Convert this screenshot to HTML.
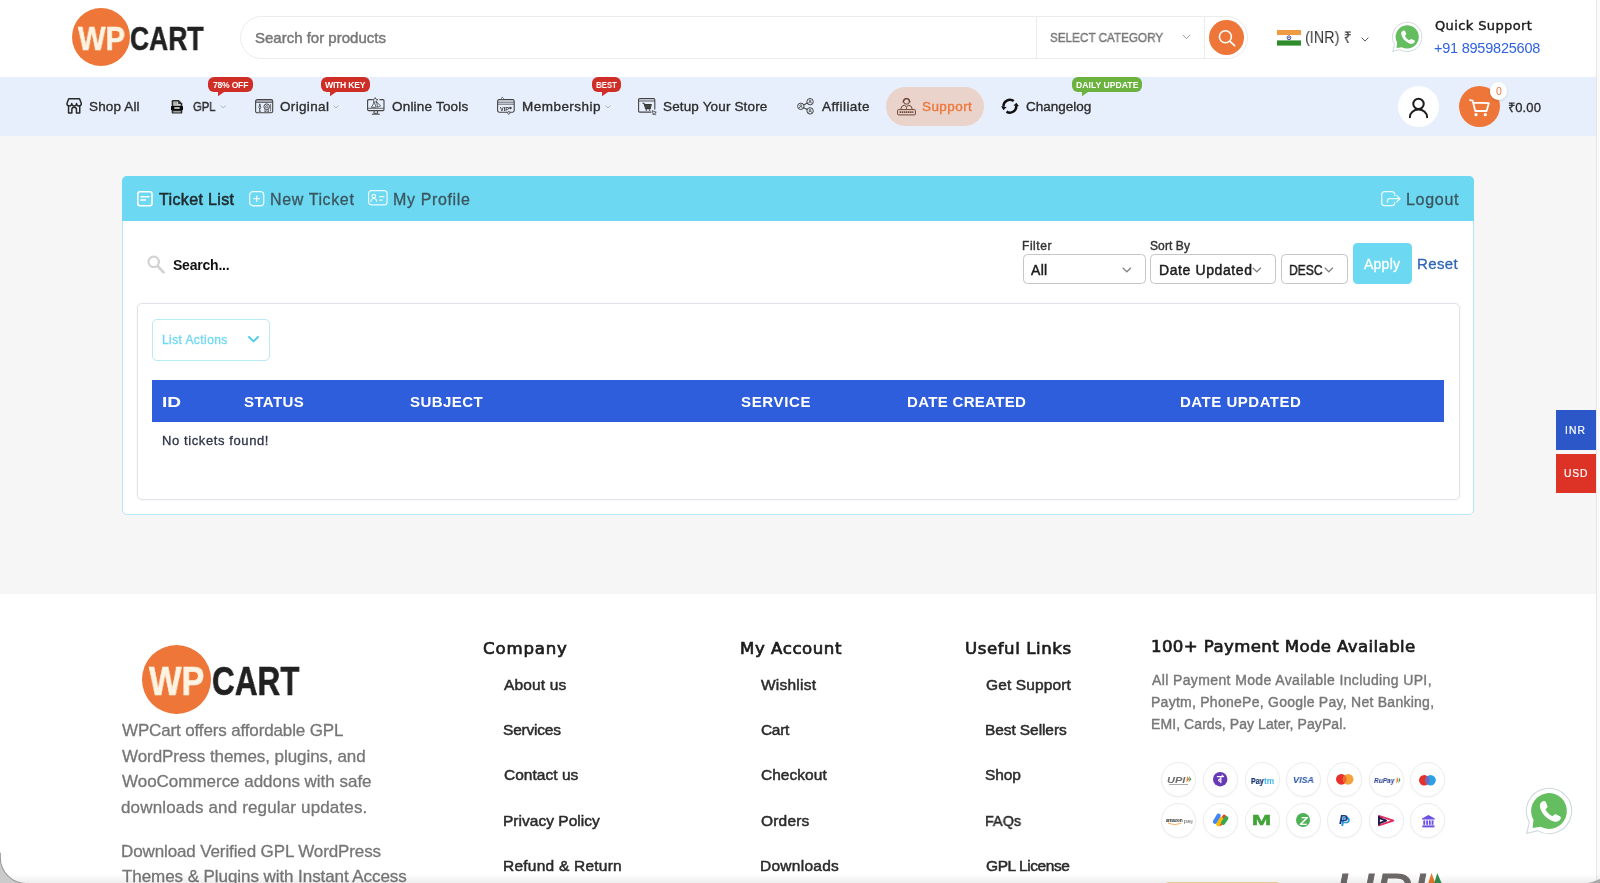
<!DOCTYPE html>
<html lang="en">
<head>
<meta charset="utf-8">
<title>Support – WPCart</title>
<style>
*{box-sizing:border-box;margin:0;padding:0}
html,body{width:1600px;height:883px;overflow:hidden;background:#f6f6f6}
body{position:relative;font-family:"Liberation Sans",sans-serif;color:#2a2a2a;font-size:14px;line-height:1}
a{color:inherit;text-decoration:none}
.t{position:absolute;white-space:nowrap;line-height:1;display:block;will-change:transform}
.b{position:absolute;display:block}
svg{position:absolute;display:block;overflow:visible}
header,nav,main,footer,section,aside,ul,li{display:block;list-style:none}

#topbg{left:0;top:0;width:1596px;height:77px;background:#fff}
#navbg{left:0;top:77px;width:1596px;height:59px;background:#e8effc}
#searchbar{left:240px;top:16px;width:1008px;height:43px;border:1px solid #ececec;border-radius:22px;background:#fff}
.vdiv{top:17px;width:1px;height:41px;background:#ececec}
.disc{border-radius:50%;background:#ee7639}
.badge{height:14.6px;border-radius:6px}
.red{background:#cf2e27}.green{background:#6bb23f}
#pill{left:886px;top:87px;width:98px;height:39px;border-radius:20px;background:#ead3cb}
#user{left:1397.8px;top:85.5px;width:41.4px;height:41.4px;border-radius:50%;background:#fff}
#cart{left:1459px;top:85.5px;width:41.4px;height:41.4px;border-radius:50%;background:#ee7639}
#cnt{left:1489.5px;top:82.4px;width:17.8px;height:17.8px;border-radius:50%;background:#fff;box-shadow:0 1px 3px rgba(0,0,0,.12)}

#panel{left:122px;top:176px;width:1352px;height:338.5px;background:#fff;border:1px solid #b5e8f5;border-radius:5px}
#phead{left:122px;top:176px;width:1352px;height:45px;background:#6dd8f2;border-radius:5px 5px 0 0}
.sel{height:30px;top:254px;border:1px solid #c6c6c6;border-radius:4.5px;background:#fff}
#apply{left:1353px;top:243px;width:58.5px;height:41px;border-radius:4.5px;background:#6dd8f2}
#inner{left:136.5px;top:303px;width:1323px;height:196.5px;background:#fff;border:1px solid #e2e3e8;border-radius:5px;box-shadow:0 0 3px rgba(0,0,0,.05)}
#lact{left:152px;top:318.5px;width:117.5px;height:42px;border:1px solid #b9eaf7;border-radius:5px;background:#fff}
#thead{left:152px;top:380px;width:1292px;height:41.5px;background:#2f5edc}

#footbg{left:0;top:594px;width:1596px;height:289px;background:#fff}
.pay{width:35px;height:35px;border-radius:50%;background:#fff;border:1px solid #ececec;box-shadow:0 1px 2px rgba(0,0,0,.04)}

#inr{left:1556px;top:410px;width:40px;height:39.5px;background:#2c57c9}
#usd{left:1556px;top:453.5px;width:40px;height:39.5px;background:#dc3326}
#sbar{left:1595.5px;top:0;width:4.5px;height:883px;background:#fafafa;border-left:1px solid #e6e6e6}
#botshade{left:0;top:874px;width:1600px;height:9px;background:linear-gradient(rgba(0,0,0,0),rgba(0,0,0,.065))}
</style>
</head>
<body>

<!-- ================= TOP HEADER ================= -->
<header>
  <div class="b" id="topbg"></div>
  <a href="#" aria-label="WPCart">
    <span class="b disc" style="left:71.5px;top:7.5px;width:58px;height:58px"></span>
    <span class="t" style="left:77.5px;top:21.6px;font-family:'Liberation Sans',sans-serif;font-size:33.4px;font-weight:700;-webkit-text-stroke:.5px currentColor;transform:scaleX(0.877);transform-origin:0 0;color:#fcf3e2;">WP</span>
    <span class="t" style="left:130.2px;top:21.6px;font-family:'Liberation Sans',sans-serif;font-size:33.4px;font-weight:700;-webkit-text-stroke:.5px currentColor;transform:scaleX(0.793);transform-origin:0 0;color:#212121;">CART</span>
  </a>
  <div class="b" id="searchbar"></div>
  <span class="t" style="left:255.3px;top:30.3px;font-family:'Liberation Sans',sans-serif;font-size:15.0px;font-weight:400;-webkit-text-stroke:.45px currentColor;color:#777;">Search for products</span>
  <i class="b vdiv" style="left:1036px"></i>
  <span class="t" style="left:1050.1px;top:31.0px;font-family:'Liberation Sans',sans-serif;font-size:13.0px;font-weight:400;-webkit-text-stroke:.4px currentColor;transform:scaleX(0.900);transform-origin:0 0;color:#777;">SELECT CATEGORY</span>
  <svg style="left:1182px;top:34px" width="9" height="6" viewBox="0 0 9 6"><path d="M.8.9 4.5 4.7 8.2.9" fill="none" stroke="#999" stroke-width="1"/></svg>
  <i class="b vdiv" style="left:1204px"></i>
  <span class="b disc" style="left:1209px;top:20px;width:35px;height:35px"></span>
  <svg style="left:1209px;top:20px" width="35" height="35" viewBox="0 0 35 35"><circle cx="16.400" cy="16.700" r="6" fill="none" stroke="#fff" stroke-width="1.600"/><path d="M21 21.400 25.600 25.700" stroke="#fff" stroke-width="1.700" stroke-linecap="round"/></svg>
  <!-- flag -->
  <svg style="left:1277px;top:29.7px" width="24" height="15.6" viewBox="0 0 24 15.6"><rect width="24" height="5.2" fill="#f09b41"/><rect y="5.2" width="24" height="5.2" fill="#fff"/><rect y="10.4" width="24" height="5.2" fill="#2f8c2c"/><circle cx="12" cy="7.8" r="1.9" fill="none" stroke="#2a3f9e" stroke-width=".9"/><circle cx="12" cy="7.8" r=".7" fill="#2a3f9e"/></svg>
  <span class="t" style="left:1304.9px;top:30.4px;font-family:'Liberation Sans',sans-serif;font-size:16.0px;font-weight:400;transform:scaleX(0.900);transform-origin:0 0;color:#333;">(INR) ₹</span>
  <svg style="left:1361px;top:37px" width="8" height="5" viewBox="0 0 8 5"><path d="M.6.6 4 4.1 7.4.6" fill="none" stroke="#555" stroke-width="1"/></svg>
  <!-- whatsapp -->
  <svg style="left:1391.40px;top:22.10px" width="31.10" height="32.40" viewBox="0 0 48 50"><path d="M2.55 45.5 5.38 34.32A22.65 22.65 0 1 1 13.68 42.62Z" fill="#fff" stroke="#cfd9dd" stroke-width="1.5" stroke-linejoin="round"/><path d="M8.6 40.1 9.50 31.95A17.9 17.9 0 1 1 16.60 38.80Z" fill="#64bd5f"/><path transform="translate(25 23) scale(1.04) translate(-25.3 -23.6)" d="M19.500 14.200c1-.5 2.200-.3 2.700.8l1.500 3.600c.4.900.1 1.700-.6 2.300l-1.200 1.100c1.400 3.100 3.600 5.200 6.800 6.700l1.300-1.300c.7-.7 1.500-.8 2.300-.4l3.400 1.700c1 .5 1.300 1.600.7 2.600-1.300 2.200-3.500 3-6.200 2.400C24 32 18 26.300 16.600 19.700c-.5-2.400.5-4.500 2.900-5.500Z" fill="#fff"/></svg>
  <span class="t" style="left:1435.3px;top:19.2px;font-family:'DejaVu Sans','Liberation Sans',sans-serif;font-size:13.0px;font-weight:400;letter-spacing:0.38px;-webkit-text-stroke:.4px currentColor;color:#1c1c1c;">Quick Support</span>
  <span class="t" style="left:1434.3px;top:40.8px;font-family:'Liberation Sans',sans-serif;font-size:14.5px;font-weight:400;letter-spacing:-0.23px;color:#2f62e0;">+91 8959825608</span>
</header>

<!-- ================= NAV ================= -->
<nav>
  <div class="b" id="navbg"></div>
  <ul>
  <li><a href="#">
    <svg style="left:66px;top:98.4px" width="16.3" height="16" viewBox="0 0 16 16" fill="none" stroke="#2b2b2b" stroke-width="1.5" stroke-linejoin="round" stroke-linecap="round"><path d="M2.6.8H13.4L15.2 5.6a2.4 2.4 0 0 1-4.8 0a2.4 2.4 0 0 1-4.8 0a2.4 2.4 0 0 1-4.8 0Z"/><path d="M2.4 8.3V15.1H5.7V11.6a2.300 2.300 0 0 1 4.6 0V15.100H13.600V8.300"/></svg>
    <span class="t" style="left:88.7px;top:100.2px;font-family:'Liberation Sans',sans-serif;font-size:13.5px;font-weight:400;letter-spacing:0.14px;-webkit-text-stroke:.35px currentColor;color:#2d2d2d;">Shop All</span>
  </a></li>
  <li><a href="#">
    <svg style="left:170.800px;top:99.600px" width="12" height="13.600" viewBox="0 0 12 13.600"><path d="M1.900 0H7.800L11.300 3.400V12.400Q11.300 13.600 10.100 13.600H1.900Q.7 13.600.7 12.400V1.200Q.7 0 1.900 0Z" fill="#2e2e2e"/><path d="M2.300 1.400H7.200V4H9.700V5.700H2.300Z" fill="#d4d4d4"/><path d="M3.300 2.600H6.100M3.300 4H6.100" stroke="#777" stroke-width=".6"/><rect x="0" y="5.900" width="12" height="4.300" rx=".7" fill="#0b0b0b"/><rect x="3.300" y="7.300" width="5.400" height="1.500" rx=".3" fill="#ececec"/><rect x="2.300" y="11.200" width="7.400" height="1.200" fill="#bdbdbd"/></svg>
    <span class="t" style="left:193.4px;top:100.2px;font-family:'Liberation Sans',sans-serif;font-size:13.5px;font-weight:400;-webkit-text-stroke:.45px currentColor;transform:scaleX(0.833);transform-origin:0 0;color:#2d2d2d;">GPL</span>
    <svg style="left:220.300px;top:105px" width="6.400" height="4" viewBox="0 0 6 4"><path d="M.5.5 3 3 5.500.5" fill="none" stroke="#aaa" stroke-width=".9"/></svg>
    <span class="b badge red" style="left:208.4px;top:77.3px;width:44.4px"></span>
    <svg style="left:217.700px;top:91px" width="8" height="5" viewBox="0 0 8 5"><path d="M0 0H7.500L.700 4.800Q0 5.200 0 4.400Z" fill="#cf2e27"/></svg>
    <span class="t" style="left:213.2px;top:80.7px;font-family:'Liberation Sans',sans-serif;font-size:8.6px;font-weight:700;letter-spacing:-0.23px;color:#fff;">78% OFF</span>
  </a></li>
  <li><a href="#">
    <svg style="left:254.700px;top:99.2px" width="18.300" height="14.400" viewBox="0 0 18.300 14.400" fill="none" stroke="#444" stroke-width="1.100"><path d="M1 1H17.300V3.300H1Z" fill="#b9bcc6" stroke="none"/><rect x=".6" y=".6" width="17.100" height="13.200" rx="1.600"/><path d="M.6 3.300H17.700" stroke-width=".9"/><path d="M4.800 4.800 5.700 8.600 4.800 10 3.900 8.600ZM4.800 10V12.300M3.800 12.300H5.800" stroke-width=".9"/><circle cx="11.700" cy="7.700" r="2.800" stroke-width="1"/><circle cx="11.700" cy="7.700" r="1.100" stroke-width=".8"/><path d="M10.200 10.200 9.800 12.800 11.700 11.900 13.600 12.800 13.200 10.200" stroke-width=".8"/><path d="M15.600 5V12.400" stroke-width=".7"/></svg>
    <span class="t" style="left:280.2px;top:100.2px;font-family:'Liberation Sans',sans-serif;font-size:13.5px;font-weight:400;letter-spacing:0.34px;-webkit-text-stroke:.35px currentColor;color:#2d2d2d;">Original</span>
    <svg style="left:332.800px;top:105.2px" width="6" height="4" viewBox="0 0 6 4"><path d="M.5.5 3 3 5.500.5" fill="none" stroke="#aaa" stroke-width=".9"/></svg>
    <span class="b badge red" style="left:320.600px;top:77.3px;width:49px"></span>
    <svg style="left:330px;top:91px" width="8" height="5" viewBox="0 0 8 5"><path d="M0 0H7.500L.700 4.800Q0 5.200 0 4.400Z" fill="#cf2e27"/></svg>
    <span class="t" style="left:325.2px;top:80.7px;font-family:'Liberation Sans',sans-serif;font-size:8.6px;font-weight:700;letter-spacing:-0.23px;color:#fff;">WITH KEY</span>
  </a></li>
  <li><a href="#">
    <svg style="left:367.200px;top:97.3px" width="17.600" height="18.300" viewBox="0 0 17.600 18.300" fill="none" stroke="#444" stroke-width="1.100" stroke-linejoin="round"><path d="M5.500 2.600H1.800Q.6 2.600.6 3.800V12.400Q.6 13.600 1.800 13.600H15.800Q17 13.600 17 12.400V3.800Q17 2.600 15.800 2.600H12.500"/><path d="M.6 11.300H17" stroke-width=".8"/><path d="M7.300 13.600 6.800 16.300H10.800L10.300 13.600M4.800 17.200H12.800" stroke-width="1"/><path d="M8.200.5 9 2.300 10.900 2.500 9.500 3.800 9.900 5.700 8.200 4.700 6.500 5.700 6.900 3.800 5.500 2.500 7.400 2.300Z" stroke-width=".8"/><path d="M4.300 10.300 7.300 5.600 9.300 10.300ZM9.800 5.300 13.600 8.800 10.500 10.300Z" stroke-width=".8"/></svg>
    <span class="t" style="left:392.3px;top:100.2px;font-family:'Liberation Sans',sans-serif;font-size:13.5px;font-weight:400;letter-spacing:0.20px;-webkit-text-stroke:.35px currentColor;color:#2d2d2d;">Online Tools</span>
  </a></li>
  <li><a href="#">
    <svg style="left:497px;top:97.3px" width="17.800" height="17.800" viewBox="0 0 17.800 17.800" fill="none" stroke="#444" stroke-width="1.100" stroke-linejoin="round"><rect x=".6" y="2.600" width="16.600" height="12.600" rx="1.600"/><path d="M.6 5.200H17.200M.6 7.200H17.200" stroke-width=".8"/><path d="M5.300.3 6.600 1.600 5.300 2.900 4 1.600ZM11.800 14.200 13.100 15.900 11.800 17.500 10.500 15.900Z" fill="#e8effc" stroke-width=".8"/><circle cx="13.400" cy="11" r="1.300" fill="#444" stroke="none"/></svg>
    <span class="t" style="left:499.6px;top:106.6px;font-family:'Liberation Sans',sans-serif;font-size:5.6px;font-weight:700;transform:scaleX(0.956);transform-origin:0 0;color:#333;">VIP</span>
    <span class="t" style="left:521.6px;top:100.2px;font-family:'Liberation Sans',sans-serif;font-size:13.5px;font-weight:400;letter-spacing:0.47px;-webkit-text-stroke:.35px currentColor;color:#2d2d2d;">Membership</span>
    <svg style="left:604.600px;top:105.2px" width="6" height="4" viewBox="0 0 6 4"><path d="M.5.5 3 3 5.500.5" fill="none" stroke="#aaa" stroke-width=".9"/></svg>
    <span class="b badge red" style="left:592.200px;top:77.3px;width:28.700px"></span>
    <svg style="left:601.700px;top:91px" width="8" height="5" viewBox="0 0 8 5"><path d="M0 0H7.500L.700 4.800Q0 5.200 0 4.400Z" fill="#cf2e27"/></svg>
    <span class="t" style="left:595.7px;top:80.7px;font-family:'Liberation Sans',sans-serif;font-size:8.6px;font-weight:700;transform:scaleX(0.909);transform-origin:0 0;color:#fff;">BEST</span>
  </a></li>
  <li><a href="#">
    <svg style="left:637.700px;top:97.700px" width="19" height="17.300" viewBox="0 0 19 17.300" fill="none" stroke="#444" stroke-width="1.100" stroke-linejoin="round"><path d="M13.500 14.100H1.800Q.6 14.100.6 12.900V1.800Q.6.6 1.800.6H15.600Q16.800.6 16.800 1.800V11.500"/><path d="M.6 3H16.800" stroke-width=".9"/><path d="M4.500 5.200H6L7.600 10.600H12.200L13.300 6.500H6.400" stroke="#333" stroke-width="1.100"/><path d="M6.600 6.800H13L12 10.300H7.700Z" fill="#444" stroke="none"/><circle cx="8.300" cy="12" r=".8" fill="#333" stroke="none"/><circle cx="11.600" cy="12" r=".8" fill="#333" stroke="none"/><path d="M14.300 12.600 18.300 14.200 16.700 15 17.900 16.400 17.200 17 16 15.600 15.300 17Z" fill="#e8effc" stroke-width=".8"/></svg>
    <span class="t" style="left:663.0px;top:100.2px;font-family:'Liberation Sans',sans-serif;font-size:13.5px;font-weight:400;letter-spacing:0.15px;-webkit-text-stroke:.35px currentColor;color:#2d2d2d;">Setup Your Store</span>
  </a></li>
  <li><a href="#">
    <svg style="left:796.600px;top:98.2px" width="17" height="16.600" viewBox="0 0 17 16.600" fill="none" stroke="#444" stroke-width="1"><circle cx="3.800" cy="8.300" r="3.200"/><circle cx="13.100" cy="3.700" r="3.200"/><circle cx="13.100" cy="12.900" r="3.200"/><path d="M6.700 6.900 10.200 5.100M6.700 9.700 10.200 11.500" stroke-width="1.100"/><g stroke-width=".7"><circle cx="3.800" cy="7.500" r=".9"/><path d="M2.200 10.200a1.600 1.600 0 0 1 3.200 0"/><circle cx="13.100" cy="2.900" r=".9"/><path d="M11.500 5.600a1.600 1.600 0 0 1 3.200 0"/><circle cx="13.100" cy="12.100" r=".9"/><path d="M11.500 14.800a1.600 1.600 0 0 1 3.200 0"/></g></svg>
    <span class="t" style="left:821.5px;top:100.2px;font-family:'Liberation Sans',sans-serif;font-size:13.5px;font-weight:400;letter-spacing:0.43px;-webkit-text-stroke:.35px currentColor;color:#2d2d2d;">Affiliate</span>
  </a></li>
  <li><a href="#">
    <span class="b" id="pill"></span>
    <svg style="left:897.200px;top:97.3px" width="19" height="18.500" viewBox="0 0 19 18.500" fill="none" stroke="#6a4636" stroke-width="1" stroke-linejoin="round"><circle cx="9.500" cy="4.300" r="2.900"/><path d="M6.400 4.200A3.200 3.400 0 0 1 12.600 4.200" stroke-width="1.300"/><path d="M6.300 4V5.600M12.700 4V5.600" stroke-width="1.400"/><path d="M3.600 12.600Q3.900 8.600 7.600 8L9.500 10.200 11.400 8Q15.100 8.600 15.400 12.600"/><path d="M9.500 10.200V12.400" stroke-width=".8"/><rect x=".6" y="12.600" width="17.800" height="5.300" rx=".9" fill="#ead3cb"/><path d="M2.600 15.200H16.400" stroke-width="1.700" stroke-dasharray="1.500 .6"/></svg>
    <span class="t" style="left:922.1px;top:100.2px;font-family:'Liberation Sans',sans-serif;font-size:13.5px;font-weight:400;letter-spacing:0.43px;-webkit-text-stroke:.35px currentColor;color:#ee7639;">Support</span>
  </a></li>
  <li><a href="#">
    <svg style="left:1000.500px;top:98px" width="18" height="16.500" viewBox="0 0 18 16.500" fill="none" stroke="#111" stroke-width="2.500"><path d="M12.750 3.090A6.400 6.400 0 0 0 2.500 8.600"/><path d="M5.500 13.630A6.400 6.400 0 0 0 15.300 7.900"/><path d="M.1 8.200 5.600 8.900 2.500 12.300Z" fill="#111" stroke="none"/><path d="M12.400 7.600 17.900 8.300 15.400 4.800Z" fill="#111" stroke="none"/></svg>
    <span class="t" style="left:1025.8px;top:100.2px;font-family:'Liberation Sans',sans-serif;font-size:13.5px;font-weight:400;-webkit-text-stroke:.35px currentColor;color:#2d2d2d;">Changelog</span>
    <span class="b badge green" style="left:1072.100px;top:77.3px;width:70.200px"></span>
    <svg style="left:1081.800px;top:91px" width="8" height="5" viewBox="0 0 8 5"><path d="M0 0H7.500L.700 4.800Q0 5.200 0 4.400Z" fill="#6bb23f"/></svg>
    <span class="t" style="left:1076.0px;top:80.7px;font-family:'Liberation Sans',sans-serif;font-size:8.6px;font-weight:700;letter-spacing:0.04px;color:#fff;">DAILY UPDATE</span>
  </a></li>
  </ul>
  <a href="#" class="b" id="user"></a>
  <svg style="left:1398px;top:85.7px" width="41" height="41" viewBox="0 0 41 41" fill="none" stroke="#1d1d1d" stroke-width="2" stroke-linecap="round"><circle cx="20.500" cy="17.900" r="5.200"/><path d="M11.900 31.200A8.600 7.600 0 0 1 29.100 31.200"/></svg>
  <a href="#" class="b" id="cart"></a>
  <svg style="left:1459.2px;top:85.7px" width="41" height="41" viewBox="0 0 41 41" fill="none" stroke="#fff" stroke-width="1.800" stroke-linejoin="round" stroke-linecap="round"><path d="M11 14.200 13.600 14.600 16.300 25H27.600L29.800 17.200 14.400 16.600"/><circle cx="17" cy="28.700" r="1.600" fill="#fff" stroke="none"/><circle cx="26.300" cy="28.700" r="1.600" fill="#fff" stroke="none"/></svg>
  <span class="b" id="cnt"></span>
  <span class="t" style="left:1495.7px;top:86.2px;font-family:'Liberation Sans',sans-serif;font-size:10.5px;font-weight:400;color:#ee7639;">0</span>
  <span class="t" style="left:1507.8px;top:100.5px;font-family:'Liberation Sans',sans-serif;font-size:13.0px;font-weight:400;letter-spacing:0.15px;-webkit-text-stroke:.3px currentColor;color:#2a2a2a;">₹0.00</span>

</nav>

<main>
  <section>
    <div class="b" id="panel"></div>
    <div class="b" id="phead"></div>
    <a href="#">
      <svg style="left:137px;top:190.500px" width="15.800" height="15.500" viewBox="0 0 15.800 15.500" fill="none" stroke="#fff" stroke-width="1.600"><rect x=".8" y=".8" width="14.200" height="13.900" rx="2.200"/><path d="M3.500 5.800H12.500M3.500 9H9" stroke-width="1.500"/></svg>
      <span class="t" style="left:158.6px;top:191.6px;font-family:'Liberation Sans',sans-serif;font-size:16.0px;font-weight:400;letter-spacing:0.36px;-webkit-text-stroke:.55px currentColor;color:#1f2a2e;">Ticket List</span>
    </a>
    <a href="#">
      <svg style="left:249px;top:190.500px" width="15.400" height="15.400" viewBox="0 0 15.400 15.400" fill="none" stroke="#fff" stroke-opacity=".85" stroke-width="1.300"><rect x=".65" y=".65" width="14.100" height="14.100" rx="3.300"/><path d="M7.700 4.400V11M4.400 7.700H11"/></svg>
      <span class="t" style="left:269.8px;top:191.6px;font-family:'Liberation Sans',sans-serif;font-size:16.0px;font-weight:400;letter-spacing:0.62px;-webkit-text-stroke:.3px currentColor;color:#3a565e;">New Ticket</span>
    </a>
    <a href="#">
      <svg style="left:368.300px;top:190.400px" width="19.700" height="15.500" viewBox="0 0 19.700 15.500" fill="none" stroke="#fff" stroke-opacity=".85" stroke-width="1.200"><rect x=".6" y=".6" width="18.500" height="14.300" rx="3"/><circle cx="5.800" cy="6.100" r="1.800"/><path d="M3 12.100V11.300A2.800 2.800 0 0 1 8.600 11.300V12.100"/><path d="M11.200 6.600H16.400M11.200 10.100H14.700"/></svg>
      <span class="t" style="left:393.0px;top:191.6px;font-family:'Liberation Sans',sans-serif;font-size:16.0px;font-weight:400;letter-spacing:0.64px;-webkit-text-stroke:.3px currentColor;color:#3a565e;">My Profile</span>
    </a>
    <a href="#">
      <svg style="left:1381.200px;top:190.500px" width="20" height="15.400" viewBox="0 0 20 15.400" fill="none" stroke="#fff" stroke-opacity=".85" stroke-width="1.300" stroke-linecap="round" stroke-linejoin="round"><path d="M13.700 4.600V3.600A2.900 2.900 0 0 0 10.800.7H3.600A2.900 2.900 0 0 0 .7 3.600V11.800A2.900 2.900 0 0 0 3.600 14.700H10.800A2.900 2.900 0 0 0 13.700 11.800V11.300"/><path d="M6.500 11.200V9.700A2 2 0 0 1 8.500 7.700H18.800M15.800 4.600 19 7.700 15.800 10.900"/></svg>
      <span class="t" style="left:1405.7px;top:191.6px;font-family:'Liberation Sans',sans-serif;font-size:16.0px;font-weight:400;letter-spacing:0.72px;-webkit-text-stroke:.3px currentColor;color:#3a565e;">Logout</span>
    </a>

    <svg style="left:146px;top:255px" width="20" height="20" viewBox="0 0 20 20" fill="none" stroke="#d2d2d2" stroke-width="2.200" stroke-linecap="round"><circle cx="7.700" cy="6.900" r="5.200"/><path d="M11.700 11.200 17.600 17.300" stroke-width="2.600"/></svg>
    <span class="t" style="left:172.6px;top:258.3px;font-family:'Liberation Sans',sans-serif;font-size:14.0px;font-weight:700;letter-spacing:-0.22px;color:#111;">Search...</span>

    <span class="t" style="left:1022.2px;top:239.7px;font-family:'Liberation Sans',sans-serif;font-size:12.0px;font-weight:400;letter-spacing:0.56px;-webkit-text-stroke:.4px currentColor;color:#333;">Filter</span>
    <span class="b sel" style="left:1022.500px;width:123px"></span>
    <span class="t" style="left:1031.3px;top:262.6px;font-family:'Liberation Sans',sans-serif;font-size:14.0px;font-weight:400;letter-spacing:0.30px;-webkit-text-stroke:.45px currentColor;color:#1a1a1a;">All</span>
    <svg style="left:1121.500px;top:267px" width="9.6" height="5.8" viewBox="0 0 9.6 5.8"><path d="M.7.7 4.8 4.8 8.9.7" fill="none" stroke="#858585" stroke-width="1.3"/></svg>
    <span class="t" style="left:1150.2px;top:239.7px;font-family:'Liberation Sans',sans-serif;font-size:12.0px;font-weight:400;letter-spacing:0.10px;-webkit-text-stroke:.4px currentColor;color:#333;">Sort By</span>
    <span class="b sel" style="left:1150.200px;width:125.500px"></span>
    <span class="t" style="left:1158.6px;top:262.6px;font-family:'Liberation Sans',sans-serif;font-size:14.0px;font-weight:400;letter-spacing:0.60px;-webkit-text-stroke:.45px currentColor;color:#1a1a1a;">Date Updated</span>
    <svg style="left:1252px;top:267px" width="9.6" height="5.8" viewBox="0 0 9.6 5.8"><path d="M.7.7 4.8 4.8 8.9.7" fill="none" stroke="#858585" stroke-width="1.3"/></svg>
    <span class="b sel" style="left:1281px;width:66.500px"></span>
    <span class="t" style="left:1289.1px;top:262.6px;font-family:'Liberation Sans',sans-serif;font-size:14.0px;font-weight:400;-webkit-text-stroke:.45px currentColor;transform:scaleX(0.863);transform-origin:0 0;color:#1a1a1a;">DESC</span>
    <svg style="left:1324.300px;top:267px" width="9.6" height="5.8" viewBox="0 0 9.6 5.8"><path d="M.7.7 4.8 4.8 8.9.7" fill="none" stroke="#858585" stroke-width="1.3"/></svg>
    <a href="#" class="b" id="apply"></a>
    <span class="t" style="left:1364.0px;top:256.7px;font-family:'Liberation Sans',sans-serif;font-size:14.0px;font-weight:400;letter-spacing:0.25px;-webkit-text-stroke:.3px currentColor;color:#fff;">Apply</span>
    <a href="#" class="t" style="left:1416.7px;top:256.2px;font-family:'Liberation Sans',sans-serif;font-size:15.0px;font-weight:400;letter-spacing:0.40px;-webkit-text-stroke:.3px currentColor;color:#2f66b5;">Reset</a>

    <div class="b" id="inner"></div>
    <div class="b" id="lact"></div>
    <span class="t" style="left:161.9px;top:334.0px;font-family:'Liberation Sans',sans-serif;font-size:12.0px;font-weight:400;letter-spacing:0.42px;-webkit-text-stroke:.3px currentColor;color:#6dd8f2;">List Actions</span>
    <svg style="left:247.500px;top:336.400px" width="11" height="7" viewBox="0 0 11 7"><path d="M1 1 5.500 5.400 10 1" fill="none" stroke="#4fcdec" stroke-width="1.900" stroke-linecap="round" stroke-linejoin="round"/></svg>
    <div class="b" id="thead"></div>
    <span class="t" style="left:161.7px;top:393.9px;font-family:'Liberation Sans',sans-serif;font-size:15.0px;font-weight:700;transform:scaleX(1.271);transform-origin:0 0;color:#fff;">ID</span>
    <span class="t" style="left:244.4px;top:393.9px;font-family:'Liberation Sans',sans-serif;font-size:15.0px;font-weight:700;letter-spacing:0.40px;color:#fff;">STATUS</span>
    <span class="t" style="left:410.2px;top:393.9px;font-family:'Liberation Sans',sans-serif;font-size:15.0px;font-weight:700;letter-spacing:0.43px;color:#fff;">SUBJECT</span>
    <span class="t" style="left:741.1px;top:393.9px;font-family:'Liberation Sans',sans-serif;font-size:15.0px;font-weight:700;letter-spacing:0.67px;color:#fff;">SERVICE</span>
    <span class="t" style="left:906.6px;top:393.9px;font-family:'Liberation Sans',sans-serif;font-size:15.0px;font-weight:700;letter-spacing:0.33px;color:#fff;">DATE CREATED</span>
    <span class="t" style="left:1180.2px;top:393.9px;font-family:'Liberation Sans',sans-serif;font-size:15.0px;font-weight:700;letter-spacing:0.51px;color:#fff;">DATE UPDATED</span>
    <span class="t" style="left:161.6px;top:433.7px;font-family:'Liberation Sans',sans-serif;font-size:13.0px;font-weight:400;letter-spacing:0.60px;-webkit-text-stroke:.3px currentColor;color:#2c3345;">No tickets found!</span>
  </section>

</main>

<footer>
  <div class="b" id="footbg"></div>
  <section>
    <a href="#" aria-label="WPCart">
      <span class="b disc" style="left:141.500px;top:645px;width:69px;height:69px"></span>
      <span class="t" style="left:149.0px;top:661.1px;font-family:'Liberation Sans',sans-serif;font-size:40.0px;font-weight:700;-webkit-text-stroke:.6px currentColor;transform:scaleX(0.859);transform-origin:0 0;color:#fcf3e2;">WP</span>
      <span class="t" style="left:212.2px;top:661.1px;font-family:'Liberation Sans',sans-serif;font-size:40.0px;font-weight:700;-webkit-text-stroke:.6px currentColor;transform:scaleX(0.787);transform-origin:0 0;color:#212121;">CART</span>
    </a>
    <p>
      <span class="t" style="left:122.2px;top:722.0px;font-family:'Liberation Sans',sans-serif;font-size:17.0px;font-weight:400;letter-spacing:-0.14px;-webkit-text-stroke:.3px currentColor;color:#767676;">WPCart offers affordable GPL</span>
      <span class="t" style="left:122.2px;top:747.5px;font-family:'Liberation Sans',sans-serif;font-size:17.0px;font-weight:400;letter-spacing:-0.06px;-webkit-text-stroke:.3px currentColor;color:#767676;">WordPress themes, plugins, and</span>
      <span class="t" style="left:122.2px;top:773.0px;font-family:'Liberation Sans',sans-serif;font-size:17.0px;font-weight:400;letter-spacing:-0.02px;-webkit-text-stroke:.3px currentColor;color:#767676;">WooCommerce addons with safe</span>
      <span class="t" style="left:121.2px;top:798.5px;font-family:'Liberation Sans',sans-serif;font-size:17.0px;font-weight:400;letter-spacing:0.15px;-webkit-text-stroke:.3px currentColor;color:#767676;">downloads and regular updates.</span>
    </p>
    <p>
      <span class="t" style="left:121.2px;top:842.9px;font-family:'Liberation Sans',sans-serif;font-size:17.0px;font-weight:400;letter-spacing:-0.12px;-webkit-text-stroke:.3px currentColor;color:#767676;">Download Verified GPL WordPress</span>
      <span class="t" style="left:122.2px;top:868.4px;font-family:'Liberation Sans',sans-serif;font-size:17.0px;font-weight:400;letter-spacing:-0.07px;-webkit-text-stroke:.3px currentColor;color:#767676;">Themes &amp; Plugins with Instant Access</span>
    </p>
  </section>
  <section>
    <span class="t" style="left:483.2px;top:641.3px;font-family:'DejaVu Sans','Liberation Sans',sans-serif;font-size:16.6px;font-weight:400;letter-spacing:0.83px;-webkit-text-stroke:.7px currentColor;color:#1c1c1c;">Company</span>
    <ul>
      <li><a href="#" class="t" style="left:504.4px;top:677.1px;font-family:'Liberation Sans',sans-serif;font-size:15.5px;font-weight:400;letter-spacing:0.14px;-webkit-text-stroke:.5px currentColor;color:#2b2b2b;">About us</a></li>
      <li><a href="#" class="t" style="left:503.4px;top:722.4px;font-family:'Liberation Sans',sans-serif;font-size:15.5px;font-weight:400;letter-spacing:-0.20px;-webkit-text-stroke:.5px currentColor;color:#2b2b2b;">Services</a></li>
      <li><a href="#" class="t" style="left:504.4px;top:767.3px;font-family:'Liberation Sans',sans-serif;font-size:15.5px;font-weight:400;letter-spacing:0.02px;-webkit-text-stroke:.5px currentColor;color:#2b2b2b;">Contact us</a></li>
      <li><a href="#" class="t" style="left:503.4px;top:813.0px;font-family:'Liberation Sans',sans-serif;font-size:15.5px;font-weight:400;letter-spacing:0.02px;-webkit-text-stroke:.5px currentColor;color:#2b2b2b;">Privacy Policy</a></li>
      <li><a href="#" class="t" style="left:503.4px;top:858.3px;font-family:'Liberation Sans',sans-serif;font-size:15.5px;font-weight:400;letter-spacing:0.23px;-webkit-text-stroke:.5px currentColor;color:#2b2b2b;">Refund &amp; Return</a></li>
    </ul>
  </section>
  <section>
    <span class="t" style="left:740.3px;top:641.3px;font-family:'DejaVu Sans','Liberation Sans',sans-serif;font-size:16.6px;font-weight:400;letter-spacing:0.56px;-webkit-text-stroke:.7px currentColor;color:#1c1c1c;">My Account</span>
    <ul>
      <li><a href="#" class="t" style="left:760.8px;top:677.1px;font-family:'Liberation Sans',sans-serif;font-size:15.5px;font-weight:400;letter-spacing:0.23px;-webkit-text-stroke:.5px currentColor;color:#2b2b2b;">Wishlist</a></li>
      <li><a href="#" class="t" style="left:760.8px;top:722.4px;font-family:'Liberation Sans',sans-serif;font-size:15.5px;font-weight:400;letter-spacing:-0.33px;-webkit-text-stroke:.5px currentColor;color:#2b2b2b;">Cart</a></li>
      <li><a href="#" class="t" style="left:760.8px;top:767.3px;font-family:'Liberation Sans',sans-serif;font-size:15.5px;font-weight:400;letter-spacing:0.03px;-webkit-text-stroke:.5px currentColor;color:#2b2b2b;">Checkout</a></li>
      <li><a href="#" class="t" style="left:760.8px;top:813.0px;font-family:'Liberation Sans',sans-serif;font-size:15.5px;font-weight:400;letter-spacing:0.20px;-webkit-text-stroke:.5px currentColor;color:#2b2b2b;">Orders</a></li>
      <li><a href="#" class="t" style="left:759.8px;top:858.3px;font-family:'Liberation Sans',sans-serif;font-size:15.5px;font-weight:400;letter-spacing:0.27px;-webkit-text-stroke:.5px currentColor;color:#2b2b2b;">Downloads</a></li>
    </ul>
  </section>
  <section>
    <span class="t" style="left:965.3px;top:641.3px;font-family:'DejaVu Sans','Liberation Sans',sans-serif;font-size:16.6px;font-weight:400;letter-spacing:0.56px;-webkit-text-stroke:.7px currentColor;color:#1c1c1c;">Useful Links</span>
    <ul>
      <li><a href="#" class="t" style="left:985.8px;top:677.1px;font-family:'Liberation Sans',sans-serif;font-size:15.5px;font-weight:400;letter-spacing:0.12px;-webkit-text-stroke:.5px currentColor;color:#2b2b2b;">Get Support</a></li>
      <li><a href="#" class="t" style="left:984.8px;top:722.4px;font-family:'Liberation Sans',sans-serif;font-size:15.5px;font-weight:400;letter-spacing:-0.09px;-webkit-text-stroke:.5px currentColor;color:#2b2b2b;">Best Sellers</a></li>
      <li><a href="#" class="t" style="left:984.8px;top:767.3px;font-family:'Liberation Sans',sans-serif;font-size:15.5px;font-weight:400;letter-spacing:-0.13px;-webkit-text-stroke:.5px currentColor;color:#2b2b2b;">Shop</a></li>
      <li><a href="#" class="t" style="left:984.9px;top:813.0px;font-family:'Liberation Sans',sans-serif;font-size:15.5px;font-weight:400;-webkit-text-stroke:.5px currentColor;transform:scaleX(0.932);transform-origin:0 0;color:#2b2b2b;">FAQs</a></li>
      <li><a href="#" class="t" style="left:985.8px;top:858.3px;font-family:'Liberation Sans',sans-serif;font-size:15.5px;font-weight:400;letter-spacing:-0.42px;-webkit-text-stroke:.5px currentColor;color:#2b2b2b;">GPL License</a></li>
    </ul>
  </section>
  <section>
    <span class="t" style="left:1150.8px;top:639.2px;font-family:'DejaVu Sans','Liberation Sans',sans-serif;font-size:16.6px;font-weight:400;letter-spacing:0.38px;-webkit-text-stroke:.7px currentColor;color:#1c1c1c;">100+ Payment Mode Available</span>
    <p>
      <span class="t" style="left:1151.8px;top:672.6px;font-family:'Liberation Sans',sans-serif;font-size:14.0px;font-weight:400;letter-spacing:0.38px;-webkit-text-stroke:.4px currentColor;color:#777;">All Payment Mode Available Including UPI,</span>
      <span class="t" style="left:1150.8px;top:694.8px;font-family:'Liberation Sans',sans-serif;font-size:14.0px;font-weight:400;letter-spacing:0.26px;-webkit-text-stroke:.4px currentColor;color:#777;">Paytm, PhonePe, Google Pay, Net Banking,</span>
      <span class="t" style="left:1150.8px;top:717.0px;font-family:'Liberation Sans',sans-serif;font-size:14.0px;font-weight:400;letter-spacing:0.08px;-webkit-text-stroke:.4px currentColor;color:#777;">EMI, Cards, Pay Later, PayPal.</span>
    </p>
    <ul>
      <li><span class="b pay" style="left:1161.400px;top:761.800px"></span>
        <span class="t" style="left:1166.8px;top:775.6px;font-family:'Liberation Sans',sans-serif;font-size:8.8px;font-weight:700;font-style:italic;transform:scaleX(1.250);transform-origin:0 0;color:#6d6d6d;">UPI</span>
        <svg style="left:1186.300px;top:776.200px" width="6" height="7" viewBox="0 0 6 7"><path d="M1.300 0 3.300 3.300.3 6.600Z" fill="#ea7a2a"/><path d="M3.200 0 5.400 3.300 2.200 6.600 3.700 3.300Z" fill="#2e8f4e"/></svg>
        <i class="b" style="left:1168.500px;top:784.200px;width:19px;height:.7px;background:#aaa"></i></li>
      <li><span class="b pay" style="left:1203.100px;top:761.800px"></span>
        <svg style="left:1213.400px;top:772.300px" width="14.400" height="14.400" viewBox="0 0 14.400 14.400"><circle cx="7.200" cy="7.200" r="7.200" fill="#6739b7"/><path d="M4.300 4.600H9.500M7.900 4.600V10.800M7.900 7.300C5.300 6.300 4.400 9.400 7.900 9.600M9 3.200 10.600 4.600" fill="none" stroke="#fff" stroke-width="1.100" stroke-linecap="round"/></svg></li>
      <li><span class="b pay" style="left:1244.500px;top:761.800px"></span>
        <span class="t" style="left:1250.9px;top:776.6px;font-family:'Liberation Sans',sans-serif;font-size:8.3px;font-weight:700;-webkit-text-stroke:.2px currentColor;transform:scaleX(0.853);transform-origin:0 0;color:#14316e;">Pay</span>
        <span class="t" style="left:1263.9px;top:776.6px;font-family:'Liberation Sans',sans-serif;font-size:8.3px;font-weight:700;transform:scaleX(0.970);transform-origin:0 0;color:#3ab7ef;">tm</span></li>
      <li><span class="b pay" style="left:1285.800px;top:761.800px"></span>
        <span class="t" style="left:1292.5px;top:776.4px;font-family:'Liberation Sans',sans-serif;font-size:9.2px;font-weight:700;font-style:italic;transform:scaleX(0.975);transform-origin:0 0;color:#2a55a8;">VISA</span></li>
      <li><span class="b pay" style="left:1326.900px;top:761.800px"></span>
        <svg style="left:1336px;top:774.400px" width="17.500" height="10.700" viewBox="0 0 17.500 10.700"><circle cx="5.350" cy="5.350" r="5.350" fill="#e7312a"/><circle cx="12.150" cy="5.350" r="5.350" fill="#f6a23b"/><path d="M8.750 1.220A5.350 5.350 0 0 1 8.750 9.480A5.350 5.350 0 0 1 8.750 1.220Z" fill="#f0692a"/></svg></li>
      <li><span class="b pay" style="left:1368.500px;top:761.800px"></span>
        <span class="t" style="left:1374.2px;top:777.2px;font-family:'Liberation Sans',sans-serif;font-size:7.8px;font-weight:700;font-style:italic;transform:scaleX(0.840);transform-origin:0 0;color:#273f8f;">RuPay</span>
        <svg style="left:1395.500px;top:776.600px" width="5" height="6.600" viewBox="0 0 5 6.600"><path d="M1 0 2.600 3.300.2 6.600Z" fill="#ea7a2a"/><path d="M2.700 0 4.500 3.300 2 6.600 3.200 3.300Z" fill="#2e8f4e"/></svg></li>
      <li><span class="b pay" style="left:1410.200px;top:761.800px"></span>
        <svg style="left:1419px;top:774.500px" width="16.800" height="10.500" viewBox="0 0 16.800 10.500"><circle cx="5.250" cy="5.250" r="5.250" fill="#e6302c"/><circle cx="11.550" cy="5.250" r="5.250" fill="#2d9fe6"/><path d="M8.400 1.050A5.250 5.250 0 0 1 8.400 9.450A5.250 5.250 0 0 1 8.400 1.050Z" fill="#6f6cc0"/></svg></li>

      <li><span class="b pay" style="left:1161.400px;top:803.100px"></span>
        <span class="t" style="left:1166.2px;top:818.2px;font-family:'Liberation Sans',sans-serif;font-size:5.6px;font-weight:700;transform:scaleX(0.786);transform-origin:0 0;color:#222;">amazon</span>
        <span class="t" style="left:1183.6px;top:818.2px;font-family:'Liberation Sans',sans-serif;font-size:6.0px;font-weight:400;transform:scaleX(0.933);transform-origin:0 0;color:#555;">pay</span>
        <svg style="left:1167.500px;top:822.600px" width="14" height="2.400" viewBox="0 0 14 2.400"><path d="M.3.3Q6.500 3.200 13 .4" fill="none" stroke="#f29b32" stroke-width=".8" stroke-linecap="round"/></svg></li>
      <li><span class="b pay" style="left:1203.100px;top:803.100px"></span>
        <svg style="left:1212px;top:812.600px" width="17" height="14" viewBox="0 0 17 14"><g stroke-linecap="round" stroke-width="4.200" fill="none"><path d="M8.300 10.700 12.300 3.800" stroke="#e94235"/><path d="M6.200 11.300 9.300 6" stroke="#fabb05"/><path d="M11.200 9.700 14.300 5.300" stroke="#34a853"/><path d="M2.900 8.800 6.600 2.600" stroke="#4285f4"/></g></svg></li>
      <li><span class="b pay" style="left:1244.500px;top:803.100px"></span>
        <span class="t" style="left:1252.4px;top:813.0px;font-family:'Liberation Sans',sans-serif;font-size:14.8px;font-weight:700;-webkit-text-stroke:.5px currentColor;transform:scaleX(1.545);transform-origin:0 0;color:#43a437;">M</span></li>
      <li><span class="b pay" style="left:1285.800px;top:803.100px"></span>
        <span class="b" style="left:1296.200px;top:813.300px;width:14.200px;height:14.200px;border-radius:50%;background:#4eb156"></span>
        <span class="t" style="left:1299.5px;top:815.6px;font-family:'Liberation Sans',sans-serif;font-size:11.5px;font-weight:700;font-style:italic;transform:scaleX(1.086);transform-origin:0 0;color:#fff;">Z</span></li>
      <li><span class="b pay" style="left:1326.900px;top:803.100px"></span>
        <span class="t" style="left:1341.4px;top:816.2px;font-family:'Liberation Sans',sans-serif;font-size:12.5px;font-weight:700;font-style:italic;transform:scaleX(1.050);transform-origin:0 0;color:#2d9bd8;">P</span>
        <span class="t" style="left:1339.2px;top:814.2px;font-family:'Liberation Sans',sans-serif;font-size:12.5px;font-weight:700;font-style:italic;transform:scaleX(1.050);transform-origin:0 0;color:#1d3b80;">P</span></li>
      <li><span class="b pay" style="left:1368.500px;top:803.100px"></span>
        <svg style="left:1378.200px;top:814.600px" width="16.800" height="11.200" viewBox="0 0 16.800 11.200"><path d="M.9.900 15.400 5.600.9 10.300Z" fill="none" stroke="#e42c5e" stroke-width="1.800" stroke-linejoin="round"/><path d="M.9.900V10.300M.9 2.800 8.200 5.600.9 8.400" fill="none" stroke="#1c1b4d" stroke-width="1.800" stroke-linejoin="round"/></svg></li>
      <li><span class="b pay" style="left:1410.200px;top:803.100px"></span>
        <svg style="left:1421.800px;top:814.900px" width="12.800" height="12.400" viewBox="0 0 12.800 12.400" fill="#6b50e2"><path d="M6.400 0 12.800 3.400V4.600H0V3.400Z"/><rect x="1.300" y="5.400" width="1.900" height="4.400"/><rect x="4.200" y="5.400" width="1.800" height="4.400"/><rect x="6.900" y="5.400" width="1.800" height="4.400"/><rect x="9.600" y="5.400" width="1.900" height="4.400"/><rect x=".3" y="10.400" width="12.200" height="2"/></svg></li>
    </ul>
    <i class="b" style="left:1164.500px;top:881.500px;width:115.800px;height:6px;border-radius:4px 4px 0 0;background:#f6d8a2"></i>
    <span class="t" style="left:1334.4px;top:866.0px;font-family:'Liberation Sans',sans-serif;font-size:53.0px;font-weight:400;font-style:italic;-webkit-text-stroke:.9px currentColor;transform:scaleX(1.047);transform-origin:0 0;color:#6e6a6a;">UPI</span>
    <svg style="left:1428px;top:873.200px" width="14" height="10" viewBox="0 0 14 10"><path d="M3.500 0 7.300 10H.3Z" fill="#ea7a2a"/><path d="M9.200 0 13.600 10H6.400Z" fill="#2e8f4e"/></svg>

  </section>
  <!-- floating whatsapp -->
  <svg style="left:1523.75px;top:788.20px" width="48.00" height="50.00" viewBox="0 0 48 50"><path d="M2.55 45.5 5.38 34.32A22.65 22.65 0 1 1 13.68 42.62Z" fill="#fff" stroke="#cfd9dd" stroke-width="1.1" stroke-linejoin="round"/><path d="M8.6 40.1 9.50 31.95A17.9 17.9 0 1 1 16.60 38.80Z" fill="#64bd5f"/><path transform="translate(25 23) scale(1.04) translate(-25.3 -23.6)" d="M19.500 14.200c1-.5 2.200-.3 2.700.8l1.500 3.600c.4.900.1 1.700-.6 2.300l-1.200 1.100c1.400 3.100 3.600 5.200 6.800 6.700l1.300-1.300c.7-.7 1.500-.8 2.300-.4l3.400 1.700c1 .5 1.300 1.600.7 2.600-1.300 2.200-3.500 3-6.200 2.400C24 32 18 26.300 16.600 19.700c-.5-2.400.5-4.500 2.900-5.500Z" fill="#fff"/></svg>

</footer>

<aside>
  <a href="#" class="b" id="inr"></a><span class="t" style="left:1565.2px;top:425.8px;font-family:'Liberation Sans',sans-serif;font-size:10.3px;font-weight:400;letter-spacing:1.10px;-webkit-text-stroke:.2px currentColor;color:#fff;">INR</span>
  <a href="#" class="b" id="usd"></a><span class="t" style="left:1563.5px;top:468.8px;font-family:'Liberation Sans',sans-serif;font-size:10.3px;font-weight:400;letter-spacing:0.80px;-webkit-text-stroke:.2px currentColor;color:#fff;">USD</span>
  <div class="b" id="sbar"></div>
  <div class="b" id="botshade"></div>
  <svg style="left:0;top:853px" width="30" height="30" viewBox="0 0 30 30"><defs><filter id="bl" x="-20%" y="-20%" width="140%" height="140%"><feGaussianBlur stdDeviation=".6"/></filter></defs><g filter="url(#bl)"><path d="M-2 -2H.3V4.500A26 26 0 0 0 26.300 30.500H32V33H-2Z" fill="#cbcbcb"/><path d="M.3 0V4.500A26 26 0 0 0 26.300 30.500" fill="none" stroke="#9a9a9a" stroke-width="1.100"/></g></svg>
  <svg style="left:1580px;top:875px" width="20" height="8" viewBox="0 0 20 8"><g filter="url(#bl)"><path d="M3 9Q13 7.500 21 3.500V9Z" fill="#a9a9a9"/></g></svg>
</aside>

</body>
</html>
